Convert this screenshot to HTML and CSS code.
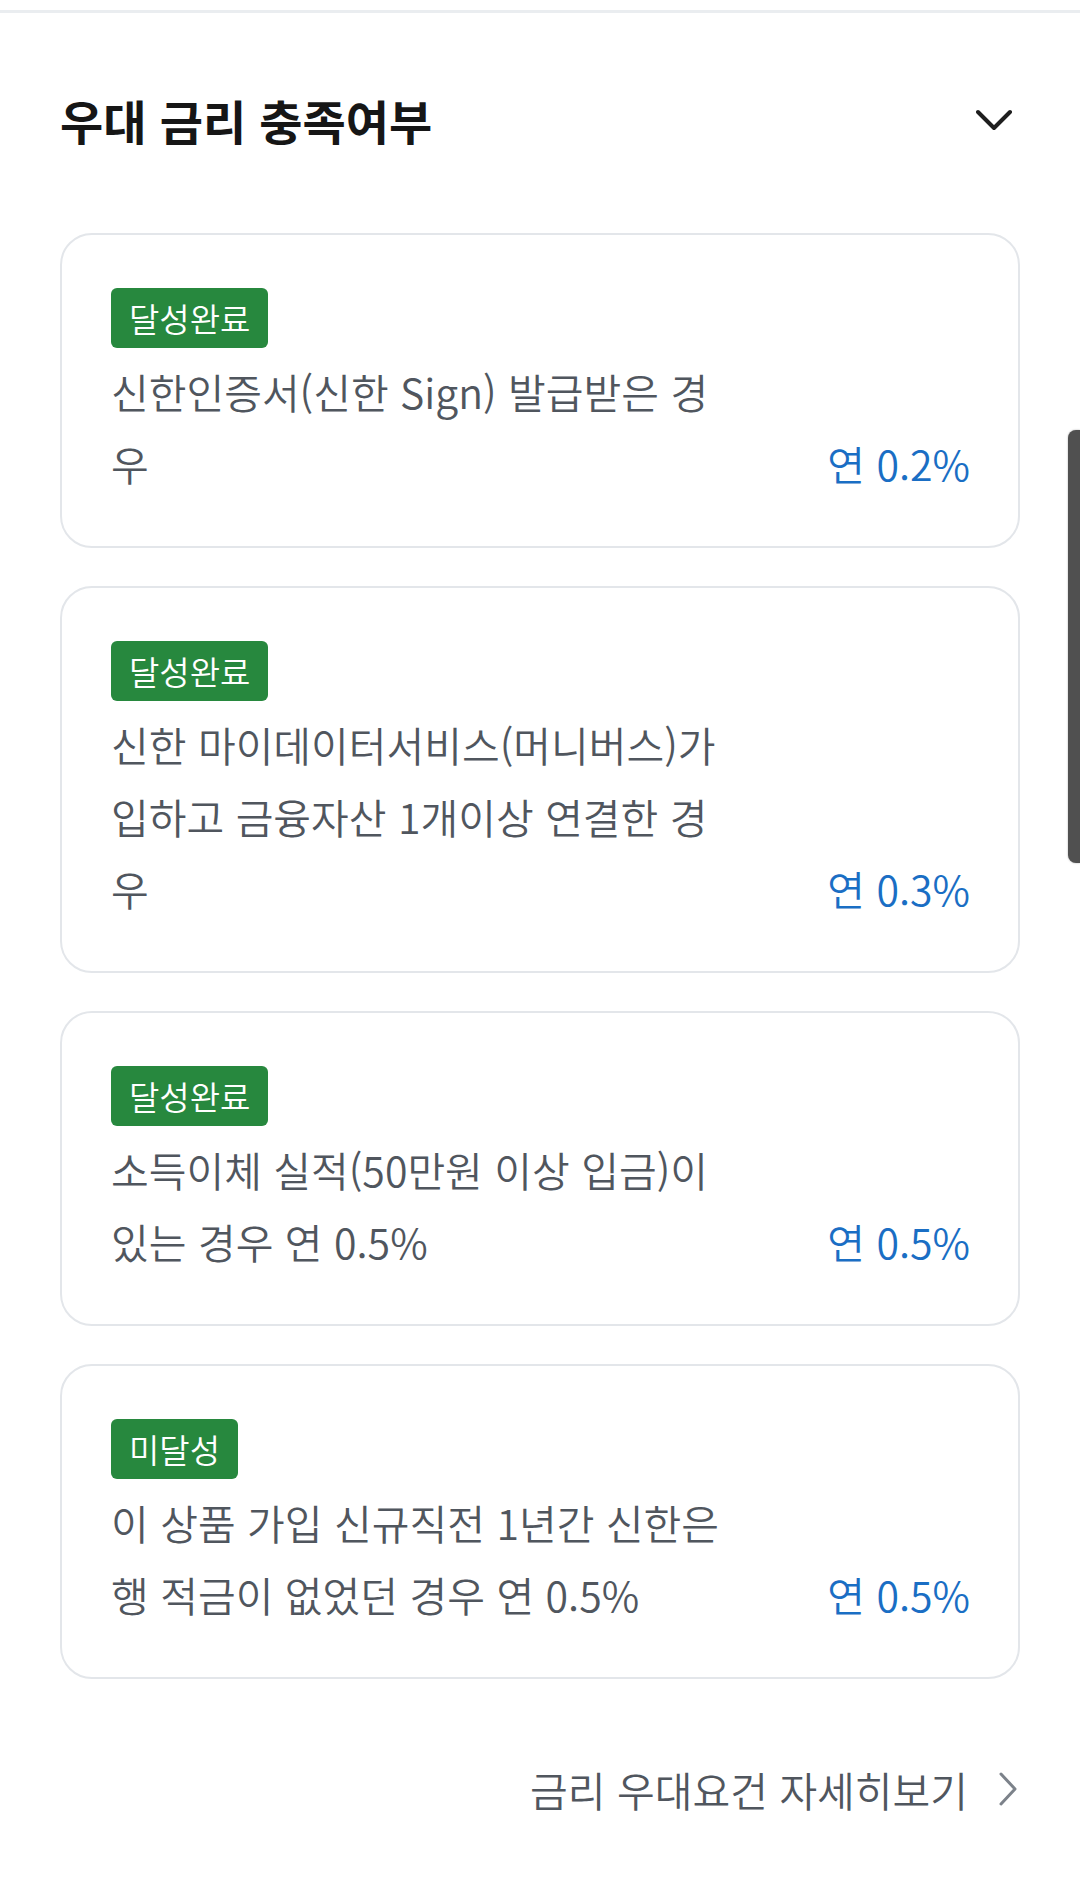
FILE: index.html
```html
<!DOCTYPE html>
<html lang="ko">
<head>
<meta charset="utf-8">
<title>우대 금리 충족여부</title>
<link rel="stylesheet" href="styles.css">
</head>
<body>
<div class="topline"></div>
<main class="page">
  <header class="title-row">
    <h2 class="title">우대 금리 충족여부</h2>
    <svg class="chev-down" width="40" height="24" viewBox="0 0 40 24" aria-hidden="true">
      <polyline points="2,4 18,20 34,4" fill="none" stroke="#1e1e1e" stroke-width="4" stroke-linecap="round" stroke-linejoin="round"/>
    </svg>
  </header>

  <section class="cards">
    <article class="card">
      <span class="badge">달성완료</span>
      <div class="row">
        <p class="desc">신한인증서(신한 Sign) 발급받은 경우</p>
        <span class="rate">연 0.2%</span>
      </div>
    </article>
    <article class="card">
      <span class="badge">달성완료</span>
      <div class="row">
        <p class="desc">신한 마이데이터서비스(머니버스)가입하고 금융자산 1개이상 연결한 경우</p>
        <span class="rate">연 0.3%</span>
      </div>
    </article>
    <article class="card">
      <span class="badge">달성완료</span>
      <div class="row">
        <p class="desc">소득이체 실적(50만원 이상 입금)이 있는 경우 연 0.5%</p>
        <span class="rate">연 0.5%</span>
      </div>
    </article>
    <article class="card">
      <span class="badge">미달성</span>
      <div class="row">
        <p class="desc">이 상품 가입 신규직전 1년간 신한은행 적금이 없었던 경우 연 0.5%</p>
        <span class="rate">연 0.5%</span>
      </div>
    </article>
  </section>

  <a class="more" href="#">
    <span>금리 우대요건 자세히보기</span>
    <svg class="chev-right" width="22" height="36" viewBox="0 0 22 36" aria-hidden="true">
      <polyline points="3,3 17,18 3,33" fill="none" stroke="#7c828a" stroke-width="3" stroke-linecap="round" stroke-linejoin="round"/>
    </svg>
  </a>
</main>
<div class="scrollbar"></div>
</body>
</html>
```

FILE: styles.css
```css
* { box-sizing: border-box; }
html, body {
  margin: 0;
  padding: 0;
  background: #ffffff;
}
body {
  font-family: "Noto Sans CJK KR", "Noto Sans", sans-serif;
  color: #50565e;
}
.topline {
  margin-top: 10px;
  height: 3px;
  background: #eaedf0;
}
.page {
  padding: 0 60px;
}
.title-row {
  display: flex;
  align-items: center;
  justify-content: space-between;
  height: 60px;
  margin-top: 77px;
}
.title {
  margin: 0;
  font-size: 47px;
  font-weight: 700;
  letter-spacing: 0;
  color: #161616;
  line-height: 60px;
}
.chev-down {
  display: block;
  margin-right: 4px;
}
.cards {
  margin-top: 83px;
  display: flex;
  flex-direction: column;
  gap: 38px;
}
.card {
  border: 2px solid #e3e6ea;
  border-radius: 32px;
  padding: 53px 48px 47px 49px;
  background: #fff;
}
.badge {
  display: inline-block;
  height: 60px;
  line-height: 60px;
  padding: 0 18px;
  background: #27883e;
  color: #fff;
  font-size: 33px;
  font-weight: 350;
  border-radius: 6px;
}
.row {
  display: flex;
  align-items: flex-end;
  justify-content: space-between;
  margin-top: 7px;
}
.desc {
  margin: 0;
  width: 622px;
  font-size: 41px;
  font-weight: 350;
  line-height: 72px;
  word-break: break-all;
  color: #50565e;
}
.rate {
  font-size: 41px;
  font-weight: 350;
  line-height: 72px;
  color: #1a6ec4;
  white-space: nowrap;
}
.more {
  display: flex;
  justify-content: flex-end;
  align-items: center;
  gap: 30px;
  margin-top: 80px;
  height: 60px;
  text-decoration: none;
  color: #50565e;
  font-size: 41px;
  font-weight: 350;
}
.chev-right { display: block; }
.scrollbar {
  position: fixed;
  right: 0;
  top: 430px;
  width: 12px;
  height: 433px;
  background: #505050;
  border-radius: 8px 0 0 8px;
  box-shadow: 0 0 2px rgba(0,0,0,0.35);
}
```
